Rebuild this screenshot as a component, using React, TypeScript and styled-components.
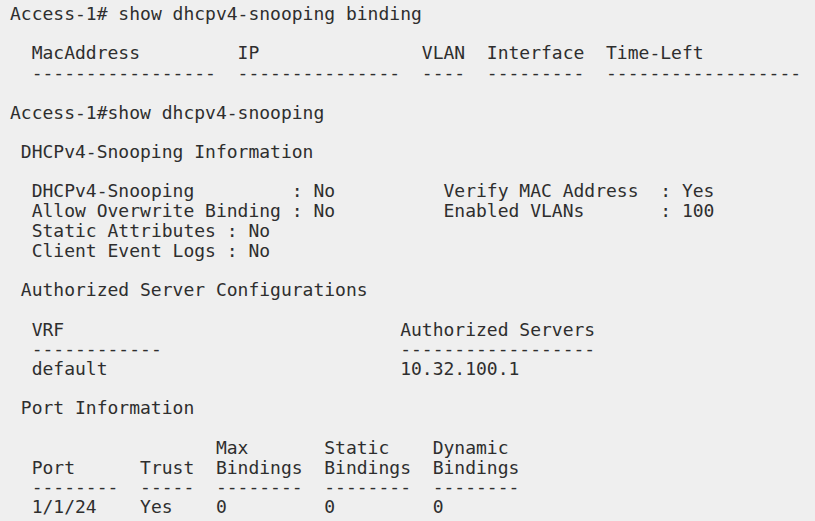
import React from "react";
import styled, { createGlobalStyle } from "styled-components";

const Global = createGlobalStyle`
  html, body {
    margin: 0;
    padding: 0;
    background: #efefef;
  }
`;

const Screen = styled.main`
  width: 815px;
  height: 521px;
  box-sizing: border-box;
  padding: 4px 0 0 10px;
  background: #efefef;
  overflow: hidden;
`;

const Terminal = styled.pre`
  margin: 0;
  font-family: "DejaVu Sans Mono", "Liberation Mono", monospace;
  font-size: 18px;
  line-height: 19.72px;
  color: #2e2e2e;
  white-space: pre;
`;

const Line = styled.div<{ $indent?: number }>`
  height: 19.72px;
  padding-left: ${(p) => (p.$indent ?? 0) * 10.84}px;
`;

const lines: [number, string][] = [
  [0, "Access-1# show dhcpv4-snooping binding"],
  [0, ""],
  [2, "MacAddress         IP               VLAN  Interface  Time-Left"],
  [2, "-----------------  ---------------  ----  ---------  ------------------"],
  [0, ""],
  [0, "Access-1#show dhcpv4-snooping"],
  [0, ""],
  [1, "DHCPv4-Snooping Information"],
  [0, ""],
  [2, "DHCPv4-Snooping         : No          Verify MAC Address  : Yes"],
  [2, "Allow Overwrite Binding : No          Enabled VLANs       : 100"],
  [2, "Static Attributes : No"],
  [2, "Client Event Logs : No"],
  [0, ""],
  [1, "Authorized Server Configurations"],
  [0, ""],
  [2, "VRF                               Authorized Servers"],
  [2, "------------                      ------------------"],
  [2, "default                           10.32.100.1"],
  [0, ""],
  [1, "Port Information"],
  [0, ""],
  [2, "                 Max       Static    Dynamic"],
  [2, "Port      Trust  Bindings  Bindings  Bindings"],
  [2, "--------  -----  --------  --------  --------"],
  [2, "1/1/24    Yes    0         0         0"],
];

export default function App() {
  return (
    <>
      <Global />
      <Screen>
        <Terminal>
          {lines.map(([indent, text], i) => (
            <Line key={i} $indent={indent}>
              {text}
            </Line>
          ))}
        </Terminal>
      </Screen>
    </>
  );
}
